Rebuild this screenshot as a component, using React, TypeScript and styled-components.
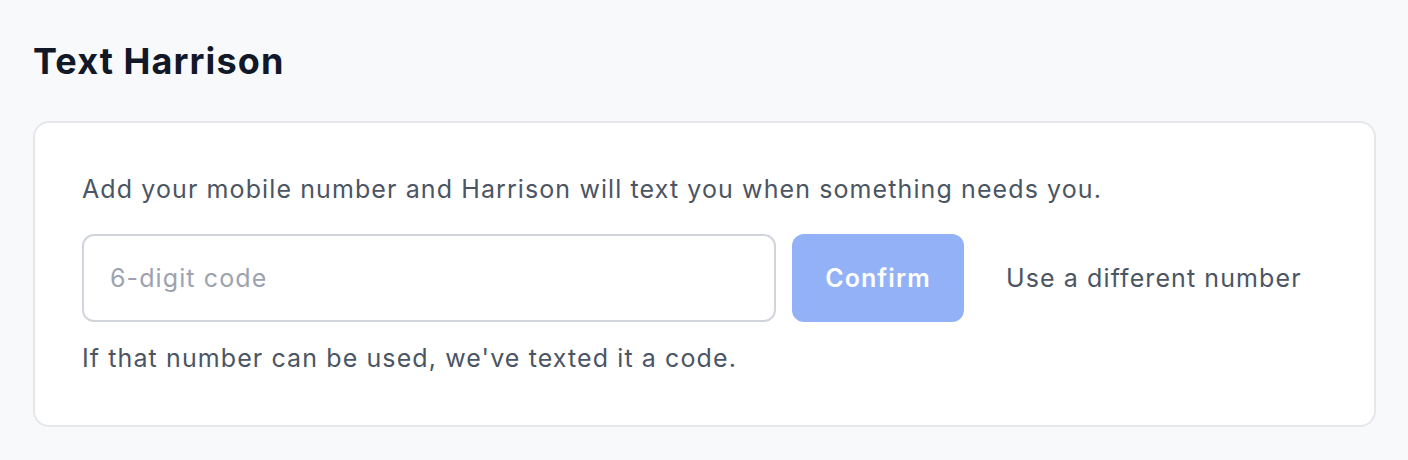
import React, { FC } from 'react';
import styled, { createGlobalStyle } from 'styled-components';

const GlobalStyle = createGlobalStyle`
  body {
    margin: 0;
    background: #f8f9fb;
    font-family: Inter, "Noto Sans", sans-serif;
  }
`;

const StyledPage = styled.div`
  padding: 41px 32px 0 33px;
`;
const StyledTitle = styled.h1`
  color: #111827;
  font-size: 36px;
  font-weight: 700;
  letter-spacing: 1.1px;
  line-height: 40px;
  margin: 0 0 40px;
`;
const StyledCard = styled.section`
  background: #ffffff;
  border: 2px solid #e5e7eb;
  border-radius: 16px;
  padding: 48px 48px 49px 47px;
`;
const StyledText = styled.p<{ $spaceTop?: number }>`
  color: #4b5563;
  font-size: 25px;
  letter-spacing: 1.1px;
  line-height: 36px;
  margin: ${({ $spaceTop }) => $spaceTop ?? 0}px 0 0;
`;
const StyledRow = styled.div`
  align-items: center;
  display: flex;
  gap: 16px;
  margin-top: 27px;
`;
const StyledInput = styled.input`
  border: 2px solid #d1d5db;
  border-radius: 12px;
  box-sizing: border-box;
  color: #111827;
  font-family: inherit;
  font-size: 25px;
  height: 88px;
  letter-spacing: 1.1px;
  outline: none;
  padding: 0 26px;
  width: 694px;
  &::placeholder {
    color: #9ca3af;
  }
`;
const StyledButton = styled.button`
  background: #93b1f7;
  border: none;
  border-radius: 12px;
  color: #ffffff;
  font-family: inherit;
  font-size: 25px;
  font-weight: 600;
  height: 88px;
  letter-spacing: 1.1px;
  width: 172px;
`;
const StyledLink = styled.button`
  background: none;
  border: none;
  color: #4b5563;
  font-family: inherit;
  font-size: 25px;
  letter-spacing: 1.1px;
  margin-left: 26px;
  padding: 0;
`;

const App: FC = () => (
  <>
    <GlobalStyle />
    <StyledPage>
      <StyledTitle>Text Harrison</StyledTitle>
      <StyledCard>
        <StyledText>
          Add your mobile number and Harrison will text you when something needs you.
        </StyledText>
        <StyledRow>
          <StyledInput placeholder="6-digit code" />
          <StyledButton>Confirm</StyledButton>
          <StyledLink>Use a different number</StyledLink>
        </StyledRow>
        <StyledText $spaceTop={18}>
          If that number can be used, we've texted it a code.
        </StyledText>
      </StyledCard>
    </StyledPage>
  </>
);

export default App;
